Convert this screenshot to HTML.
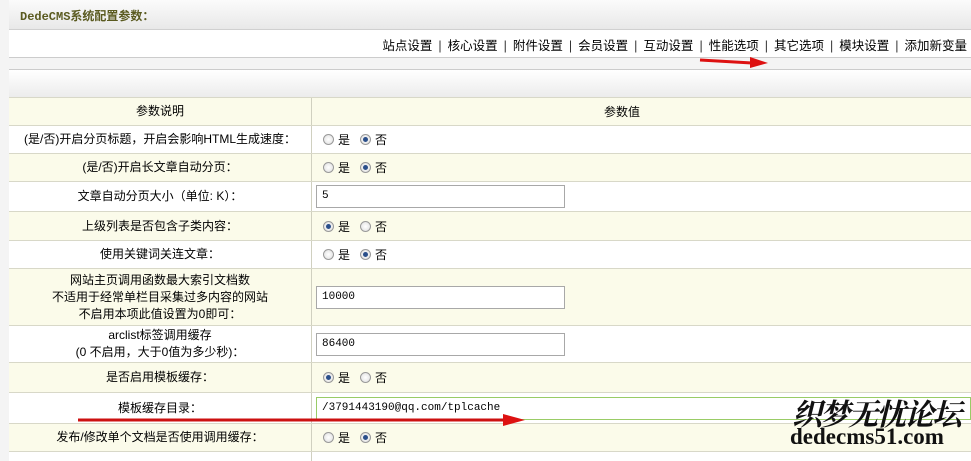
<!DOCTYPE html>
<html><head><meta charset="utf-8"><style>
*{margin:0;padding:0;box-sizing:border-box}
body{width:971px;height:456px;overflow:hidden;background:#f4f4f4;font-family:"Liberation Sans","Noto Sans CJK SC",sans-serif;font-size:12px;color:#000;position:relative}
.abs{position:absolute}
.hdr{left:9px;top:0;width:962px;height:30px;background:linear-gradient(#fbfbfb,#e8e8e8);border-bottom:1px solid #d0d0d0}
.title{left:20px;top:7px;font-size:12px;font-weight:bold;color:#5a5a20;font-family:"Liberation Mono","Noto Sans CJK SC",monospace}
.nav{left:9px;top:30px;width:962px;height:28px;background:#fff;border-bottom:1px solid #ccc}
.navt{right:4px;top:35px;font-size:12.5px;white-space:nowrap}
.navt span{margin:0 6px;color:#333}
.blank{left:9px;top:69px;width:962px;height:28px;background:linear-gradient(#fff,#ececec);border-top:1px solid #ccc}
.row{position:absolute;left:9px;width:962px;border-top:1px solid #d8d8c8}
.row .l{position:absolute;left:0;top:0;width:303px;height:100%;display:flex;align-items:center;justify-content:center;text-align:center;line-height:17px;border-right:1px solid #d0d0c0}
.row .r{position:absolute;left:304px;top:0;right:0;height:100%;display:flex;align-items:center}
.y{background:#fbfbea}.w{background:#fff}
.inp{margin-left:3px;width:249px;height:23px;border:1px solid #a8a8a8;background:#fff;padding:0 5px;line-height:21px;font-size:11px;font-family:"Liberation Mono",monospace}
.rd{display:inline-block;width:11px;height:11px;border-radius:50%;border:1px solid #999;background:radial-gradient(#fff,#ddd);vertical-align:-1px;margin-left:10px;margin-right:4px;position:relative}
.rd.on::after{content:"";position:absolute;left:2px;top:2px;width:5px;height:5px;border-radius:50%;background:#2b4f8a}
</style></head><body>
<div class="abs hdr"></div>
<div class="abs title">DedeCMS系统配置参数：</div>
<div class="abs nav"></div>
<div class="abs navt">站点设置<span>|</span>核心设置<span>|</span>附件设置<span>|</span>会员设置<span>|</span>互动设置<span>|</span>性能选项<span>|</span>其它选项<span>|</span>模块设置<span>|</span>添加新变量</div>
<div class="abs blank"></div>
<div class="row y" style="top:97px;height:28px"><div class="l">参数说明</div><div class="r" style="justify-content:center;padding-right:40px">参数值</div></div>
<div class="row w" style="top:125px;height:28px"><div class="l">(是/否)开启分页标题，开启会影响HTML生成速度：</div><div class="r"><span class="rd"></span>是<span class="rd on"></span>否</div></div>
<div class="row y" style="top:153px;height:28px"><div class="l">(是/否)开启长文章自动分页：</div><div class="r"><span class="rd"></span>是<span class="rd on"></span>否</div></div>
<div class="row w" style="top:181px;height:30px"><div class="l">文章自动分页大小（单位: K）：</div><div class="r"><div class="inp">5</div></div></div>
<div class="row y" style="top:211px;height:29px"><div class="l">上级列表是否包含子类内容：</div><div class="r"><span class="rd on"></span>是<span class="rd"></span>否</div></div>
<div class="row w" style="top:240px;height:28px"><div class="l">使用关键词关连文章：</div><div class="r"><span class="rd"></span>是<span class="rd on"></span>否</div></div>
<div class="row y" style="top:268px;height:57px"><div class="l">网站主页调用函数最大索引文档数<br>不适用于经常单栏目采集过多内容的网站<br>不启用本项此值设置为0即可：</div><div class="r"><div class="inp">10000</div></div></div>
<div class="row w" style="top:325px;height:37px"><div class="l">arclist标签调用缓存<br>(0 不启用，大于0值为多少秒)：</div><div class="r"><div class="inp">86400</div></div></div>
<div class="row y" style="top:362px;height:30px"><div class="l">是否启用模板缓存：</div><div class="r"><span class="rd on"></span>是<span class="rd"></span>否</div></div>
<div class="row w" style="top:392px;height:31px"><div class="l">模板缓存目录：</div><div class="r"><div class="inp" style="width:700px;border-color:#9c6">/3791443190@qq.com/tplcache</div></div></div>
<div class="row y" style="top:423px;height:28px"><div class="l">发布/修改单个文档是否使用调用缓存：</div><div class="r"><span class="rd"></span>是<span class="rd on"></span>否</div></div>
<div class="row w" style="top:451px;height:10px"><div class="l"></div><div class="r"></div></div>
<svg class="abs" style="left:0;top:0" width="971" height="456">
<line x1="700" y1="60" x2="752" y2="63" stroke="#d11" stroke-width="3"/><polygon points="750,57 768,63 750,68" fill="#d11"/>
<line x1="78" y1="420" x2="505" y2="420" stroke="#c11" stroke-width="3"/><polygon points="503,414 525,420 503,426" fill="#d11"/>
</svg>
<div class="abs" style="left:792px;top:390px;font-size:30px;font-style:italic;font-weight:bold;font-family:'Noto Serif CJK SC',serif;color:#111;letter-spacing:-2px">织梦无忧论坛</div>
<div class="abs" style="left:790px;top:424px;font-size:23px;font-weight:bold;font-family:'Liberation Serif',serif;color:#111">dedecms51.com</div>
</body></html>
